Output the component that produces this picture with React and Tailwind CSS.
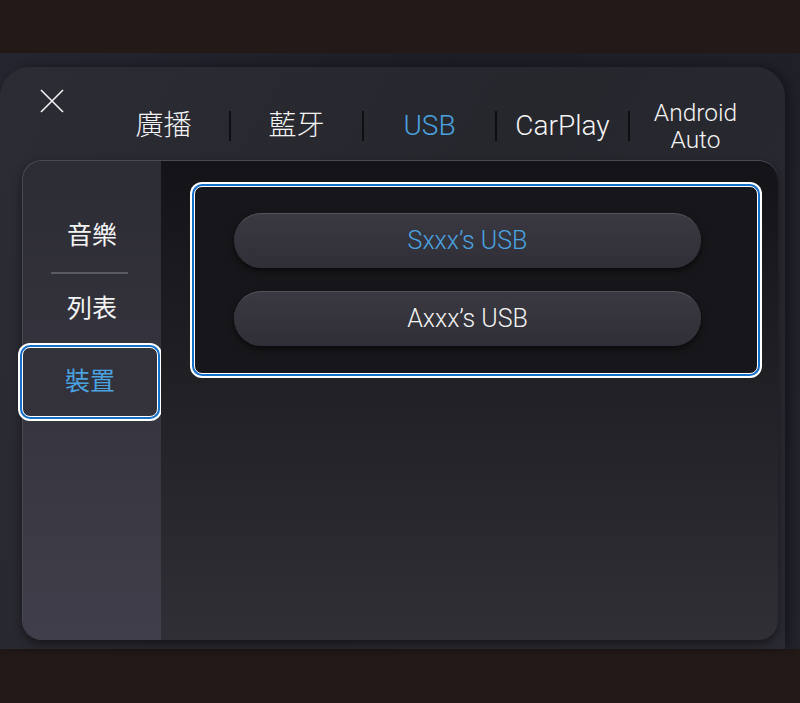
import React from "react";

const tabs = ["廣播", "藍牙", "USB", "CarPlay", "Android Auto"];

function SelectFrame({ className = "", children }) {
  return (
    <div className={`border border-white shadow-[0_0_0_2px_#1570c7,0_0_0_4px_#ffffff] ${className}`}>
      {children}
    </div>
  );
}

export default function App() {
  const active = 2;
  return (
    <div className="w-[800px] h-[703px] flex flex-col bg-[#231a18] overflow-hidden font-['Roboto','Noto_Sans_CJK_TC',sans-serif]">
      <div className="h-[53px] shrink-0" />
      <div className="h-[596px] shrink-0 pt-[14px] pr-[15px] bg-[linear-gradient(120deg,#24252e_0%,#1c1d25_40%,#22232b_100%)]">
        <div className="h-full flex flex-col rounded-t-[30px] bg-[linear-gradient(120deg,#2c2c34_0%,#26262d_50%,#2a2a32_100%)] shadow-[4px_0_10px_rgba(0,0,0,0.35)]">
          {/* header */}
          <div className="h-[93px] shrink-0 flex">
            <div className="w-[98px] pl-[40px] pt-[22px]">
              <svg width="24" height="24" viewBox="0 0 24 24" stroke="#f2f2f2" strokeWidth="1.6" fill="none">
                <path d="M1 1L23 23M23 1L1 23" />
              </svg>
            </div>
            <div className="flex items-center h-[118px]">
              {tabs.map((t, i) => (
                <React.Fragment key={t}>
                  {i > 0 && <div className="w-[2px] h-[30px] bg-[#0e0e12]" />}
                  <div
                    className={`w-[131px] text-center font-light ${
                      t === "Android Auto" ? "text-[24.5px] leading-[27px]" : "text-[28px] leading-[32px]"
                    } ${i === active ? "text-[#4aa3e0]" : "text-[#f4f4f4]"}`}
                  >
                    {t === "Android Auto" ? (
                      <>
                        Android
                        <br />
                        Auto
                      </>
                    ) : (
                      t
                    )}
                  </div>
                </React.Fragment>
              ))}
            </div>
          </div>

          {/* card */}
          <div className="ml-[22px] mr-[7px] h-[480px] shrink-0 flex rounded-[20px] shadow-[0_4px_10px_rgba(0,0,0,0.45)] border-t border-l border-[#4a4a55]">
            <div className="w-[138px] shrink-0 flex flex-col items-center rounded-l-[20px] bg-[linear-gradient(180deg,#2c2c34_0%,#36353f_50%,#403e4a_100%)] pt-[57px]">
              <div className="h-[36px] leading-[36px] text-[25px] text-[#f4f4f4]">音樂</div>
              <div className="w-[77px] h-[2px] bg-[#5a5a64] mt-[18px] mb-[17px] -ml-[5px]" />
              <div className="h-[36px] leading-[36px] text-[25px] text-[#f4f4f4]">列表</div>
              <SelectFrame className="mt-[20px] -ml-[4px] w-[136px] h-[70px] rounded-[8px] flex items-center justify-center bg-[#33323b]">
                <span className="text-[25px] text-[#4aa3e0]">裝置</span>
              </SelectFrame>
            </div>
            <div className="flex-1 rounded-r-[20px] bg-[linear-gradient(180deg,#141418_0%,#1e1e23_40%,#2f2f35_100%)] pt-[25px] pl-[33px] pr-[20px]">
              <SelectFrame className="h-[188px] rounded-[8px] bg-[#17171b] pt-[26px] pl-[39px] flex flex-col gap-[23px]">
                {["Sxxx’s USB", "Axxx’s USB"].map((d, i) => (
                  <div
                    key={d}
                    className={`w-[467px] h-[55px] rounded-full flex items-center justify-center text-[25px] font-light bg-[linear-gradient(180deg,#3a3941_0%,#302f37_100%)] border-t border-[#55545e] shadow-[0_3px_6px_rgba(0,0,0,0.6)] ${
                      i === 0 ? "text-[#4aa3e0]" : "text-[#f2f2f2]"
                    }`}
                  >
                    {d}
                  </div>
                ))}
              </SelectFrame>
            </div>
          </div>
        </div>
      </div>
      <div className="flex-1" />
    </div>
  );
}
